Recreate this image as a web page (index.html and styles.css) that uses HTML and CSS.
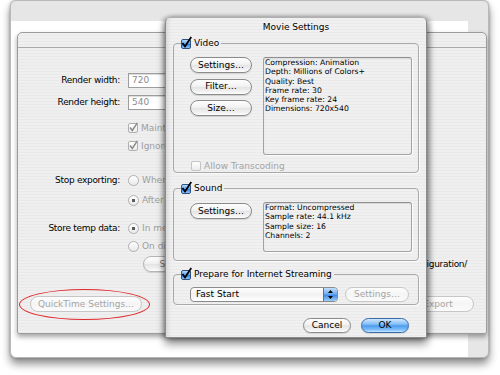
FILE: index.html
```html
<!DOCTYPE html>
<html lang="en">
<head>
  <meta charset="UTF-8">
  <meta name="viewport" content="width=device-width, initial-scale=1.0">
  <title>Movie Settings</title>
  <link rel="stylesheet" href="styles.css">
</head>
<body>
  <div class="window">
    <div class="panel">
      <div class="panel-head"></div>
      <div class="panel-body">

        <div class="section sec-size">
          <div class="row">
            <label>Render width:</label>
            <div class="ctl"><span class="field">720</span></div>
          </div>
          <div class="row">
            <label>Render height:</label>
            <div class="ctl"><span class="field">540</span></div>
          </div>
        </div>

        <div class="section sec-checks">
          <div class="row">
            <span></span>
            <div class="ctl opt off"><span class="box ticked"><svg width="10" height="11" viewBox="0 0 10 11"><path d="M2 5.5 L4.3 8.5 L9.3 0.8" fill="none" stroke="#8a8a8a" stroke-width="1.5"/></svg></span>Maintain aspect ratio</div>
          </div>
          <div class="row">
            <span></span>
            <div class="ctl opt off"><span class="box ticked"><svg width="10" height="11" viewBox="0 0 10 11"><path d="M2 5.5 L4.3 8.5 L9.3 0.8" fill="none" stroke="#8a8a8a" stroke-width="1.5"/></svg></span>Ignore pixel aspect</div>
          </div>
        </div>

        <div class="section sec-stop">
          <div class="row">
            <label>Stop exporting:</label>
            <div class="ctl opt off"><span class="radio"></span>When done rendering</div>
          </div>
          <div class="row">
            <span></span>
            <div class="ctl opt off"><span class="radio on"></span>After last frame</div>
          </div>
        </div>

        <div class="section sec-temp">
          <div class="row">
            <label>Store temp data:</label>
            <div class="ctl opt off"><span class="radio on"></span>In memory</div>
          </div>
          <div class="row">
            <span></span>
            <div class="ctl opt off"><span class="radio"></span>On disk</div>
          </div>
          <div class="row">
            <span></span>
            <div class="ctl split">
              <button class="btn btn-dim">Select…</button>
              <span>Save configuration/</span>
            </div>
          </div>
        </div>

        <div class="footer">
          <span class="circled"><button class="btn btn-off qt">QuickTime Settings…</button></span>
          <button class="btn btn-off export">Export</button>
        </div>

      </div>
    </div>
  </div>

  <div class="sheet">
    <div class="sheet-title">Movie Settings</div>

    <fieldset class="group">
      <legend><span class="check"><svg width="11" height="13" viewBox="0 0 11 13"><path d="M1.5 7 L4 10.5 L10.3 1" fill="none" stroke="#000" stroke-width="1.8"/></svg></span>Video</legend>
      <div class="group-body">
        <div class="split-row">
          <div class="btn-col">
            <button class="btn">Settings…</button>
            <button class="btn">Filter…</button>
            <button class="btn">Size…</button>
          </div>
          <div class="info video-info">
            Compression: Animation<br>
            Depth: Millions of Colors+<br>
            Quality: Best<br>
            Frame rate: 30<br>
            Key frame rate: 24<br>
            Dimensions: 720x540
          </div>
        </div>
        <div class="opt off transcode"><span class="box"></span>Allow Transcoding</div>
      </div>
    </fieldset>

    <fieldset class="group group-sound">
      <legend><span class="check"><svg width="11" height="13" viewBox="0 0 11 13"><path d="M1.5 7 L4 10.5 L10.3 1" fill="none" stroke="#000" stroke-width="1.8"/></svg></span>Sound</legend>
      <div class="group-body">
        <div class="split-row">
          <div class="btn-col">
            <button class="btn">Settings…</button>
          </div>
          <div class="info sound-info">
            Format: Uncompressed<br>
            Sample rate: 44.1 kHz<br>
            Sample size: 16<br>
            Channels: 2
          </div>
        </div>
      </div>
    </fieldset>

    <fieldset class="group group-stream">
      <legend><span class="check"><svg width="11" height="13" viewBox="0 0 11 13"><path d="M1.5 7 L4 10.5 L10.3 1" fill="none" stroke="#000" stroke-width="1.8"/></svg></span>Prepare for Internet Streaming</legend>
      <div class="group-body stream-row">
        <div class="popup">
          <span>Fast Start</span>
          <span class="arrows"><svg width="13" height="13" viewBox="0 0 13 13"><path d="M4 5 L6.5 2 L9 5 Z M4 8 L6.5 11 L9 8 Z" fill="#000"/></svg></span>
        </div>
        <button class="btn btn-off stream-settings">Settings…</button>
      </div>
    </fieldset>

    <div class="actions">
      <button class="btn action">Cancel</button>
      <button class="btn btn-ok action">OK</button>
    </div>
  </div>
</body>
</html>
```

FILE: styles.css
```css
body {
  margin: 0;
  width: 500px;
  height: 375px;
  position: relative;
  overflow: hidden;
  background: #fff;
  font-family: "DejaVu Sans", Verdana, sans-serif;
  font-size: 9px;
  color: #000;
}

/* background window */
.window {
  box-sizing: border-box;
  width: 479px;
  height: 358px;
  margin-left: 10px;
  padding: 31px 1px 0 6px;
  border: 1px solid #b9b9b9;
  border-radius: 6px;
  background:
    linear-gradient(#e6e6e6, #e6e6e6) top / 100% 20px no-repeat,
    linear-gradient(#e6e6e6, #e6e6e6) right / 20px 100% no-repeat,
    #fff;
  box-shadow: 0 6px 9px rgba(0, 0, 0, 0.45), 0 0 3px rgba(0, 0, 0, 0.3);
}
.panel {
  box-sizing: border-box;
  height: 302px;
  border: 1px solid #9c9c9c;
  border-radius: 5px 5px 2px 2px;
  background: repeating-linear-gradient(#efefef 0 2px, #e9e9e9 2px 3px);
  box-shadow: 0 3px 5px rgba(0, 0, 0, 0.35);
}
.panel-head {
  height: 14px;
  border-bottom: 1px solid #a9a9a9;
}
.section {
  display: flex;
  flex-direction: column;
}
.sec-size { margin-top: 24px; gap: 6px; }
.sec-checks { margin-top: 10px; gap: 2px; }
.sec-stop { margin-top: 18px; gap: 4px; }
.sec-temp { margin-top: 12px; gap: 2px; }
.row {
  display: grid;
  grid-template-columns: 102px 1fr;
  column-gap: 8px;
  height: 16px;
  align-items: center;
}
.row label {
  text-align: right;
  letter-spacing: -0.3px;
}
.field {
  display: block;
  box-sizing: border-box;
  width: 70px;
  height: 15px;
  padding-left: 3px;
  line-height: 13px;
  border: 1px solid #9d9d9d;
  background: #fff;
  color: #8c8c8c;
  box-shadow: inset 0 1px 1px rgba(0, 0, 0, 0.15);
}
.opt {
  display: flex;
  align-items: center;
  gap: 3px;
  white-space: nowrap;
}
.off { color: #9e9e9e; }
.box {
  box-sizing: border-box;
  position: relative;
  width: 10px;
  height: 10px;
  border: 1px solid #b0b0b0;
  border-radius: 2px;
  background: linear-gradient(#fff, #ececec);
  flex: none;
}
.box svg {
  position: absolute;
  left: -1px;
  top: -2px;
}
.radio {
  box-sizing: border-box;
  width: 11px;
  height: 11px;
  border: 1px solid #b0b0b0;
  border-radius: 50%;
  background: linear-gradient(#fff, #e9e9e9);
  flex: none;
}
.radio.on {
  background: radial-gradient(circle, #5a5a5a 0 1.4px, transparent 2px), linear-gradient(#fff, #e9e9e9);
}
.split {
  display: flex;
  justify-content: space-between;
  align-items: center;
  padding-right: 19px;
  white-space: nowrap;
  letter-spacing: -0.3px;
}
.split .btn {
  margin-left: 15px;
  width: 70px;
  letter-spacing: 0;
}

.footer {
  display: flex;
  justify-content: space-between;
  align-items: center;
  height: 16px;
  margin-top: 24px;
  padding: 0 12px;
}
.circled {
  position: relative;
  display: flex;
}
.circled::after {
  content: "";
  position: absolute;
  left: -11px;
  right: -8px;
  top: -7px;
  bottom: -8px;
  border: 1.5px solid #e0262b;
  border-radius: 50%;
}
.qt { width: 112px; height: 15px; }
.export { width: 72px; height: 15px; }

/* aqua buttons */
.btn {
  box-sizing: border-box;
  height: 16px;
  padding: 0;
  border: 1px solid #8b8b8b;
  border-radius: 8px;
  background: linear-gradient(#fdfdfd, #f2f2f2 45%, #e4e4e4 52%, #f3f3f3 85%, #fff);
  box-shadow: 0 1px 1px rgba(0, 0, 0, 0.12);
  font: inherit;
  line-height: 13px;
  color: #000;
}
.btn-off {
  border-color: #c6c6c6;
  background: linear-gradient(#fdfdfd, #f5f5f5 50%, #fbfbfb);
  box-shadow: none;
  color: #a6a6a6;
}
.btn-dim {
  border-color: #b5b5b5;
  color: #7a7a7a;
}
.btn-ok {
  border-color: #3c6ca6;
  background: linear-gradient(#cfe7fd, #86c0f7 40%, #4f9cef 52%, #79bbf8 80%, #c3e5ff);
}

/* sheet */
.sheet {
  position: absolute;
  left: 165px;
  top: 17px;
  box-sizing: border-box;
  width: 262px;
  height: 321px;
  border: 1px solid #8a8a8a;
  border-top-color: #b0b0b0;
  border-radius: 5px 5px 0 0;
  background: repeating-linear-gradient(#f0f0f0 0 2px, #eaeaea 2px 3px);
  box-shadow: 0 6px 9px rgba(0, 0, 0, 0.45), 3px 0 5px rgba(0, 0, 0, 0.25), -2px 0 4px rgba(0, 0, 0, 0.25),
    inset 5px 0 5px -4px rgba(0, 0, 0, 0.15);
}
.sheet-title {
  height: 20px;
  line-height: 18px;
  text-align: center;
}
.group {
  margin: 0 7px;
  padding: 0;
  min-inline-size: 0;
  border: 1px solid #a9a9a9;
  border-radius: 4px;
  box-shadow: 1px 1px 0 rgba(255, 255, 255, 0.7);
}
.group legend {
  display: flex;
  align-items: center;
  gap: 3px;
  height: 11px;
  margin-left: 7px;
  padding: 0 2px 0 0;
  line-height: 11px;
}
.group-sound { margin-top: 10px; }
.group-stream { margin-top: 8px; }
.check {
  position: relative;
  box-sizing: border-box;
  width: 10px;
  height: 10px;
  border: 1px solid #2f5283;
  border-radius: 2px;
  background: linear-gradient(#b9dafa, #5da2ec 48%, #2f7fdc 55%, #8ec6f8);
  flex: none;
}
.check svg {
  position: absolute;
  left: -1px;
  top: -4px;
}
.group-body {
  padding: 8px 5px 1px 16px;
}
.group-sound .group-body { padding-bottom: 8px; }
.split-row {
  display: flex;
  gap: 11px;
}
.btn-col {
  display: flex;
  flex-direction: column;
  gap: 5.5px;
  width: 62px;
}
.group-sound .btn-col { padding-top: 1px; }
.info {
  box-sizing: border-box;
  width: 149px;
  padding: 0 1px;
  border: 1px solid #a2a2a2;
  border-top-color: #8e8e8e;
  border-radius: 3px;
  font-size: 7.7px;
  line-height: 9.3px;
  white-space: nowrap;
  box-shadow: inset 0 1px 1px rgba(0, 0, 0, 0.08), 1px 1px 0 rgba(255, 255, 255, 0.8);
}
.video-info { height: 98px; }
.sound-info { height: 50px; }
.transcode {
  height: 10px;
  margin-top: 6px;
  padding-left: 1px;
  color: #a4a4a4;
}
.transcode .box { border-color: #c4c4c4; }

.stream-row {
  display: flex;
  gap: 7px;
  padding-top: 7px;
  padding-bottom: 2px;
}
.popup {
  box-sizing: border-box;
  display: flex;
  justify-content: space-between;
  width: 148px;
  height: 15px;
  border: 1px solid #8b8b8b;
  border-radius: 4px;
  overflow: hidden;
  background: linear-gradient(#fff, #f1f1f1 50%, #fff);
  line-height: 13px;
}
.popup span:first-child { padding-left: 5px; }
.arrows {
  width: 13px;
  border-left: 1px solid #4a77ae;
  background: linear-gradient(#c3e0fc, #6aaaf0 48%, #3c89e5 55%, #9ccff9);
}
.arrows svg { display: block; }
.stream-settings { width: 64px; height: 15px; }
.actions {
  display: flex;
  justify-content: flex-end;
  gap: 10px;
  margin-top: 13px;
  padding-right: 17px;
}
.action { width: 48px; height: 15px; }
```
